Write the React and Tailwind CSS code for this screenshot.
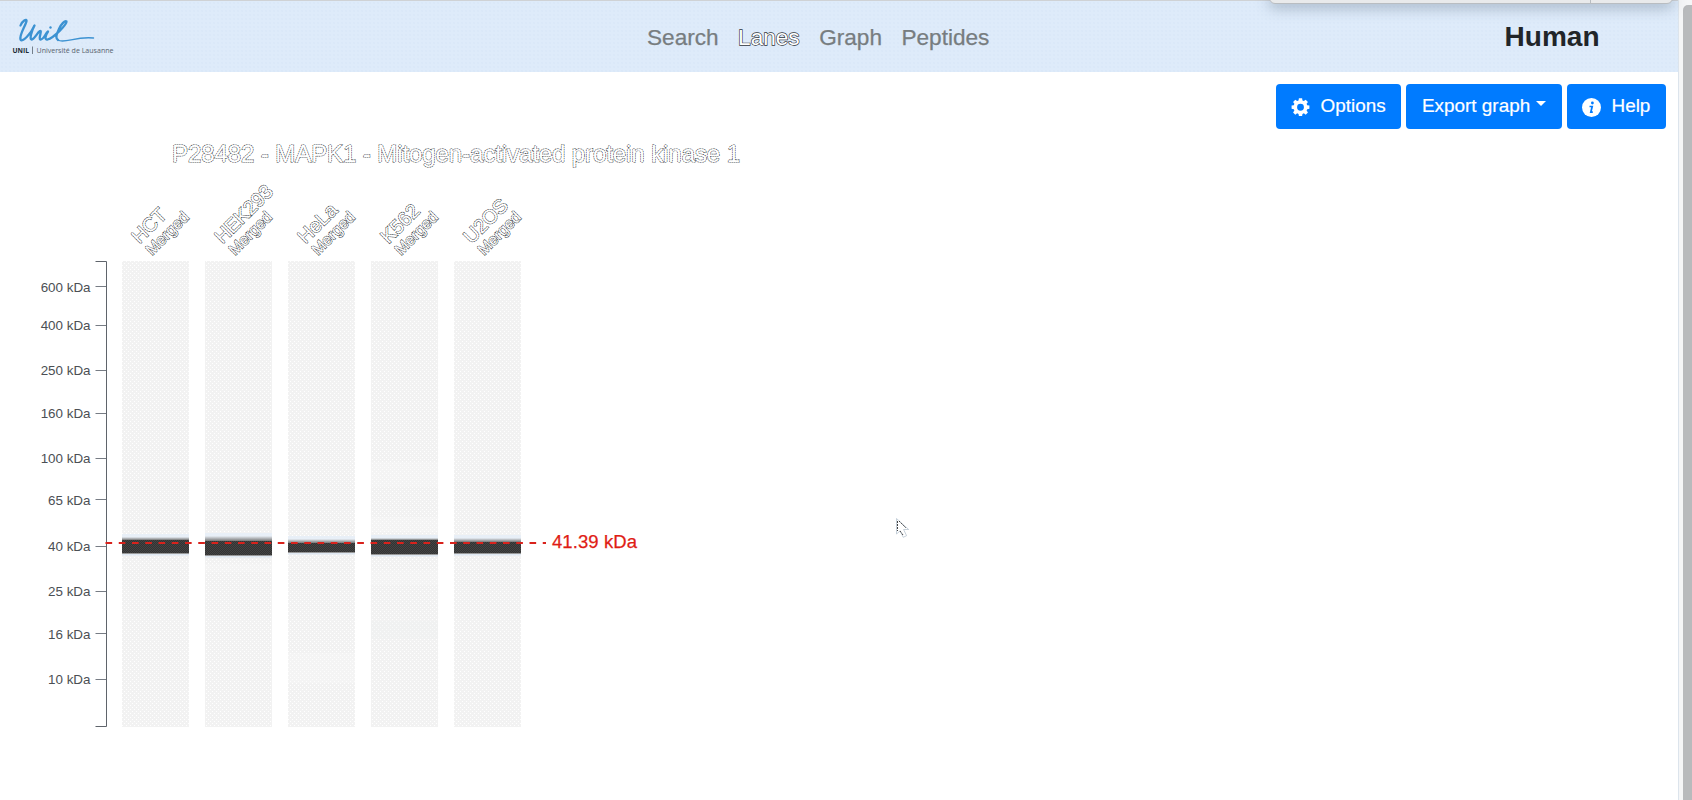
import React from "react";

const ticks = [
  ["600 kDa", 287.5], ["400 kDa", 326], ["250 kDa", 371], ["160 kDa", 414], ["100 kDa", 459],
  ["65 kDa", 500.5], ["40 kDa", 547], ["25 kDa", 592], ["16 kDa", 634.5], ["10 kDa", 680],
];

const lanes = [
  { name: "HCT", x: 122, soft: 538, top: 541, bottom: 554 },
  { name: "HEK293", x: 205, soft: 537, top: 542, bottom: 556 },
  { name: "HeLa", x: 288, soft: 540, top: 544, bottom: 553 },
  { name: "K562", x: 371, soft: 539, top: 541, bottom: 555 },
  { name: "U2OS", x: 454, soft: 539, top: 543, bottom: 554 },
];

const faint = [
  { x: 371, y: 463, h: 25, c: "#fafafa" },
  { x: 371, y: 518, h: 15, c: "#fafafa" },
  { x: 371, y: 571, h: 15, c: "#f8f8f8" },
  { x: 371, y: 622, h: 18, c: "#eff0f1" },
  { x: 205, y: 565, h: 8, c: "#fafafa" },
  { x: 288, y: 654, h: 30, c: "#fafafa" },
];

function Logo() {
  return (
    <svg className="h-[54px] w-[120px] shrink-0 self-start" viewBox="0 1 120 54">
      <g fill="none" stroke="#3c92d2" strokeLinecap="round" strokeLinejoin="round">
        <path d="M20.5 25.500C22 21 27 18 26.500 21C26 25 19 35 20.500 39.500C22 43 31 34 34.500 25.500C31.500 31 29 40 32 39.500C35 38.500 37 33 40 31C42.500 30 38 39 40.500 39.500C44 39.500 45.500 33 48 31.500C45 36 44.500 40 47.500 39.500C54 38 67 24 66.500 21.500C63 19 53 37 58 40" strokeWidth="2.3" />
        <path d="M58 40C64 44 76 36 93.500 38" strokeWidth="1.4" />
      </g>
      <circle cx="50.500" cy="27.500" r="1.2" fill="#3c92d2" />
      <text x="12.5" y="52.500" fontFamily="'Open Sans', sans-serif" fontSize="7.2" fontWeight="700" fill="#222b35" textLength="16.5" lengthAdjust="spacingAndGlyphs">UNIL</text>
      <path d="M32.5 46.500V54" stroke="#59636e" strokeWidth=".8" />
      <text x="36.5" y="52.500" fontFamily="'Open Sans', sans-serif" fontSize="7.2" fill="#59636e" textLength="77" lengthAdjust="spacingAndGlyphs">Université de Lausanne</text>
    </svg>
  );
}

function Gear() {
  return (
    <svg className="mt-[3px] h-[19px] w-[19px]" viewBox="0 0 512 512" fill="currentColor">
      <path fillRule="evenodd" d="M213 8h86l10 60 37 15 50-35 60 60-35 50 15 37 60 10v86l-60 10-15 37 35 50-60 60-50-35-37 15-10 60h-86l-10-60-37-15-50 35-60-60 35-50-15-37-60-10v-86l60-10 15-37-35-50 60-60 50 35 37-15zM256 158a92 92 0 1 0 0 184 92 92 0 0 0 0-184z" />
    </svg>
  );
}

function Info() {
  return (
    <svg className="mt-[3px] h-[19px] w-[19px]" viewBox="0 0 19 19">
      <circle cx="9.5" cy="9.5" r="9.5" fill="white" />
      <circle cx="10.4" cy="5" r="1.4" fill="#007bff" />
      <path d="M7.5 8.5h2.700l-1.400 5.700h2" fill="none" stroke="#007bff" strokeWidth="1.7" />
    </svg>
  );
}

const button = "flex h-[45px] items-center rounded-[4px] bg-[#007bff] pb-[1px] text-[18.9px] leading-none text-white [-webkit-text-stroke:0.2px_white]";

export default function App() {
  return (
    <div className="relative flex h-[800px] w-[1692px] overflow-hidden bg-white font-['Liberation_Sans',Arial,sans-serif]">
      <div className="flex w-[1678px] flex-col">
        <header className="flex h-[72px] items-center border-t border-[#cfd2d5] bg-[#deebfa] bg-[radial-gradient(circle,#d3e3f4_0.5px,transparent_0.8px)] bg-[size:4px_4px]">
          <Logo />
          <nav className="ml-[527px] flex items-center gap-[19.5px] pt-[2px] text-[22.6px] leading-[30px] text-[#777d80] [-webkit-text-stroke:0.25px_#777d80]">
            <a>Search</a>
            <a className="text-white [paint-order:stroke_fill] [-webkit-text-stroke:1.3px_#30353a]">Lanes</a>
            <a>Graph</a>
            <a>Peptides</a>
          </nav>
          <strong className="ml-auto mr-[78.5px] text-[28px] leading-[30px] text-[#212529]">Human</strong>
        </header>
        <div className="flex h-[57px] shrink-0 justify-end gap-[5px] pr-[12px] pt-[12px]">
          <button className={button + " w-[125px] gap-[10.500px] pl-[15px]"}><Gear />Options</button>
          <button className={button + " w-[156px] gap-[6px] pl-[16px]"}>
            Export graph
            <span className="mb-[5px] h-0 w-0 border-x-[5px] border-t-[5px] border-x-transparent border-t-white" />
          </button>
          <button className={button + " w-[99px] gap-[10.500px] pl-[15px]"}><Info />Help</button>
        </div>
        <svg className="h-[671px] w-[1678px] shrink-0" viewBox="0 130 1678 671">
          <defs>
            <pattern id="grain" width="4" height="4" patternUnits="userSpaceOnUse">
              <rect width="4" height="4" fill="#f2f2f2" />
              <rect width="1" height="1" fill="#fff" /><rect x="2" y="2" width="1" height="1" fill="#fff" />
            </pattern>
            <pattern id="dark" width="2" height="2" patternUnits="userSpaceOnUse">
              <rect width="2" height="2" fill="#444" />
              <rect width="1" height="1" fill="#333" /><rect x="1" y="1" width="1" height="1" fill="#333" />
            </pattern>
            <linearGradient id="fade" x2="0" y2="1"><stop stopColor="#e8eef5" /><stop offset="1" stopColor="#777" /></linearGradient>
          </defs>
          <text x="172" y="163" fontSize="24" fill="white" stroke="#30363c" strokeWidth="1.2" strokeDasharray="1.5 .7" className="[paint-order:stroke_fill]" textLength="568">P28482 - MAPK1 - Mitogen-activated protein kinase 1</text>
          <path d="M95.5 262.5H106.5V727.5H95.5" fill="none" stroke="#5f646b" />
          {ticks.map(([label, y]) => (
            <g key={label}>
              <path d={`M95.5 ${Math.floor(y) + 0.5}H106`} stroke="#777c84" />
              <text x="90.5" y={y + 5} fontSize="13.4" fill="#4b4f54" textAnchor="end">{label}</text>
            </g>
          ))}
          {lanes.map((l) => (
            <g key={l.name}>
              <rect x={l.x} y="262" width="67" height="466" fill="url(#grain)" />
              <g fill="white" stroke="#30363c" strokeWidth="1.2" strokeDasharray="1.700 .5" className="[paint-order:stroke_fill]">
                <text transform={`translate(${l.x + 17.5} 245.5) rotate(-45)`} fontSize="19.6">{l.name}</text>
                <text transform={`translate(${l.x + 30} 257) rotate(-45)`} fontSize="15.8">Merged</text>
              </g>
            </g>
          ))}
          {faint.map((f) => <rect key={f.x + "-" + f.y} x={f.x} y={f.y} width="67" height={f.h} fill={f.c} opacity=".35" />)}
          {lanes.map((l) => (
            <g key={l.name}>
              <rect x={l.x} y={l.soft - 3} width="67" height="3" fill="#e8eff7" />
              <rect x={l.x} y={l.soft} width="67" height={l.top - l.soft} fill="url(#fade)" />
              <rect x={l.x} y={l.top} width="67" height={l.bottom - l.top} fill="url(#dark)" />
              <rect x={l.x} y={l.bottom} width="67" height="1" fill="#999" />
              <rect x={l.x} y={l.bottom + 1} width="67" height="1.5" fill="#dfe8f2" />
            </g>
          ))}
          <path d="M105.5 544H546" stroke="#d9221c" strokeWidth="2" strokeDasharray="6.65 6.6" />
          <text x="552" y="548.500" fontSize="18.5" fill="#df1d16" stroke="#df1d16" strokeWidth=".25" textLength="85">41.39 kDa</text>
          <path d="M896.5 519.5V535l3.700-3.200 3 6.500 3.400-1.600-3-6.200h5.100z" fill="white" stroke="#b9c5d1" strokeWidth=".8" />
          <path d="M897.5 522v10M899 522l7 7M900 532l3 4" stroke="#444" strokeWidth="1" strokeDasharray="2 1" />
        </svg>
      </div>
      <aside className="flex w-[14px] justify-end border-l border-[#dce4ec] bg-[#f5f6f7] pt-[5px]">
        <div className="h-[795px] w-[9px] rounded-tl-[5px] bg-[#b8babc]" />
      </aside>
      <div className="absolute left-[1269px] top-[-8px] flex h-[12px] w-[404px] justify-end rounded-b-[6px] border border-[#b9bdc1] bg-[#e9eaeb] shadow-[0_4px_14px_rgba(60,80,100,0.35)]">
        <div className="w-[82px] border-l border-[#b9bdc1]" />
      </div>
    </div>
  );
}
